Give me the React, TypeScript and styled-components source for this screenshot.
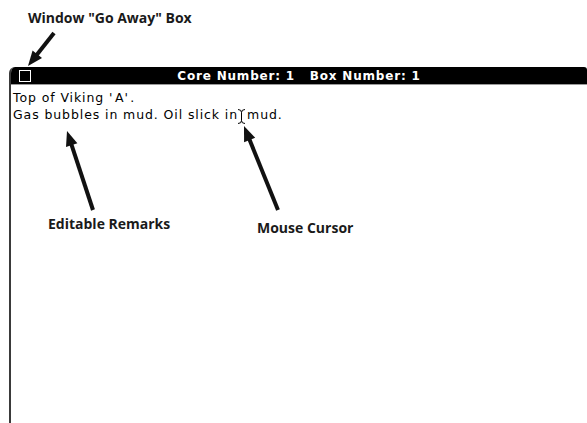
import React from "react";
import styled, { createGlobalStyle } from "styled-components";

const Global = createGlobalStyle`
  html, body { margin: 0; padding: 0; background: #fff; }
  body { width: 587px; height: 423px; overflow: hidden; }
`;

const Page = styled.div`
  position: relative;
  display: flex;
  flex-direction: column;
  width: 587px;
  height: 423px;
  padding: 8px 0 0 9px;
  box-sizing: border-box;
`;

const TopNote = styled.div`
  height: 59px;
  padding-left: 19px;
  font-family: "Open Sans", sans-serif;
  font-weight: bold;
  font-size: 14px;
  line-height: 19px;
  color: #1a1a1a;
  white-space: pre;
`;

const Window = styled.div`
  display: flex;
  flex-direction: column;
  flex: 1;
  border-left: 2px solid #3a3a3a;
  border-top-left-radius: 6px;
  border-top-right-radius: 3px;
  overflow: hidden;
`;

const TitleBar = styled.div`
  display: grid;
  grid-template-columns: 1fr auto 1fr;
  align-items: center;
  height: 17px;
  background: #000;
  border-bottom: 1px solid #9a9a9a;
  color: #fff;
  font-family: "DejaVu Sans", sans-serif;
  font-weight: bold;
  font-size: 12px;
  letter-spacing: 0.8px;
  white-space: pre;
`;

const GoAway = styled.div`
  justify-self: start;
  margin-left: 8px;
  width: 10px;
  height: 10px;
  border: 1px solid #fff;
`;

const Content = styled.div`
  flex: 1;
  padding: 4px 0 0 2px;
  font-family: "DejaVu Sans", sans-serif;
  font-size: 12.5px;
  letter-spacing: 0.9px;
  line-height: 17px;
  color: #000;
`;

const Line = styled.div`
  white-space: pre;
`;

const Quote = styled.span`
  letter-spacing: 2.5px;
`;

const Cursor = styled.svg`
  display: inline-block;
  vertical-align: -5px;
  margin: 0 1px 0 -1px;
`;

const Overlay = styled.svg`
  position: absolute;
  left: 0;
  top: 0;
  pointer-events: none;
`;

const Callout = styled.div<{ $x: number; $y: number }>`
  position: absolute;
  left: ${(p) => p.$x}px;
  top: ${(p) => p.$y}px;
  font-family: "Open Sans", sans-serif;
  font-weight: bold;
  font-size: 14px;
  line-height: 19px;
  color: #1a1a1a;
  white-space: pre;
`;

function Arrow({ tx, ty, sx, sy }: { tx: number; ty: number; sx: number; sy: number }) {
  const dx = tx - sx;
  const dy = ty - sy;
  const len = Math.hypot(dx, dy);
  const ux = dx / len;
  const uy = dy / len;
  const hl = 15;
  const hw = 6;
  const bx = tx - ux * hl;
  const by = ty - uy * hl;
  const px = -uy;
  const py = ux;
  const pts = `${tx},${ty} ${bx + px * hw},${by + py * hw} ${bx - px * hw},${by - py * hw}`;
  return (
    <g>
      <line x1={sx} y1={sy} x2={bx + ux * 2} y2={by + uy * 2} stroke="#111" strokeWidth={4} />
      <polygon points={pts} fill="#111" />
    </g>
  );
}

export default function App() {
  return (
    <>
      <Global />
      <Page>
        <TopNote>{'Window "Go Away" Box'}</TopNote>
        <Window>
          <TitleBar>
            <GoAway />
            <span>{"Core Number: 1   Box Number: 1"}</span>
            <span />
          </TitleBar>
          <Content>
            <Line>
              {"Top of Viking "}
              <Quote>'</Quote>A<Quote>'</Quote>.
            </Line>
            <Line>
              {"Gas bubbles in mud. Oil slick in"}
              <Cursor width="9" height="15" viewBox="0 0 9 15">
                <path
                  d="M1 0.5 Q4.5 0.5 4.5 3.5 Q4.5 0.5 8 0.5 M4.5 3.5 V11.5 M1 14.5 Q4.5 14.5 4.5 11.5 Q4.5 14.5 8 14.5"
                  fill="none"
                  stroke="#000"
                  strokeWidth="1"
                />
              </Cursor>
              mud.
            </Line>
          </Content>
        </Window>
        <Overlay width="587" height="423">
          <Arrow tx={28} ty={66} sx={54} sy={33} />
          <Arrow tx={67} ty={131} sx={93} sy={210} />
          <Arrow tx={244} ty={126} sx={278} sy={210} />
        </Overlay>
        <Callout $x={48} $y={214}>Editable Remarks</Callout>
        <Callout $x={257} $y={218}>Mouse Cursor</Callout>
      </Page>
    </>
  );
}
